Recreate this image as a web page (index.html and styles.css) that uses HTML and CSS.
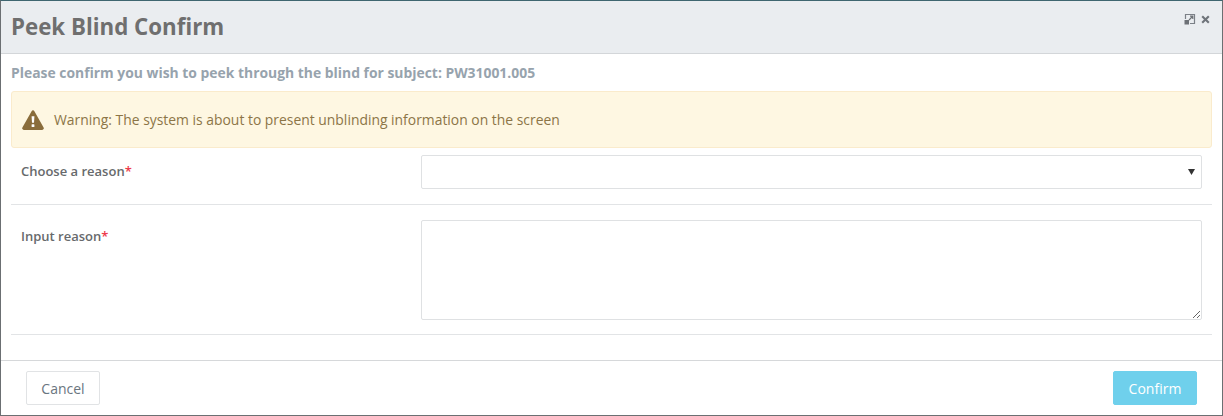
FILE: index.html
```html
<!DOCTYPE html>
<html lang="en">
<head>
    <meta charset="UTF-8">
    <title>Peek Blind Confirm</title>
    <link rel="stylesheet" href="styles.css">
</head>
<body>
    <div class="dialog">
        <div class="dialog-header">
            <h1>Peek Blind Confirm</h1>
            <div class="header-icons">
                <svg class="icon-resize" width="12" height="12" viewBox="0 0 12 12">
                    <path d="M1.5 6V1.5H10.5V10.5H6" fill="none" stroke="#7b8087" stroke-width="1.2"/>
                    <rect x="0.5" y="7" width="4.5" height="4.5" fill="#6d7176"/>
                    <path d="M5 7L8.5 3.5M6 3.2H8.8V6" fill="none" stroke="#6d7176" stroke-width="1.2"/>
                </svg>
                <svg class="icon-close" width="9" height="9" viewBox="0 0 9 9">
                    <path d="M1.2 1.2L7.8 7.8M7.8 1.2L1.2 7.8" stroke="#6f747a" stroke-width="2.1"/>
                </svg>
            </div>
        </div>
        <div class="dialog-body">
            <p class="subject">Please confirm you wish to peek through the blind for subject: PW31001.005</p>
            <div class="alert">
                <svg width="22" height="20" viewBox="0 0 22 20">
                    <path d="M9.6 1.2a1.6 1.6 0 0 1 2.8 0l9.2 16.3a1.6 1.6 0 0 1-1.4 2.4H1.8a1.6 1.6 0 0 1-1.4-2.4z" fill="#8a6d3b"/>
                    <path d="M9.6 6.2h2.8l-.4 6.6h-2z" fill="#fff"/>
                    <rect x="9.6" y="14.2" width="2.8" height="2.8" rx=".6" fill="#fff"/>
                </svg>
                <span>Warning: The system is about to present unblinding information on the screen</span>
            </div>
            <div class="form-row row-select">
                <label>Choose a reason<span class="req">*</span></label>
                <div class="field select-wrap">
                    <select></select>
                    <svg class="select-arrow" width="7" height="7" viewBox="0 0 7 7"><path d="M0 1H7L3.5 7z" fill="#333"/></svg>
                </div>
            </div>
            <div class="form-row row-text">
                <label>Input reason<span class="req">*</span></label>
                <div class="field">
                    <textarea></textarea>
                </div>
            </div>
        </div>
        <div class="dialog-footer">
            <button class="btn btn-cancel">Cancel</button>
            <button class="btn btn-confirm">Confirm</button>
        </div>
    </div>
</body>
</html>
```

FILE: styles.css
```css
* {
    box-sizing: border-box;
}

html, body {
    height: 100%;
}

body {
    margin: 0;
    background: #fff;
    font-family: "Open Sans", "Liberation Sans", sans-serif;
    font-size: 13px;
    color: #676a6c;
}

.dialog {
    height: 416px;
    display: flex;
    flex-direction: column;
    border: 1px solid #6b6f72;
    border-top-color: #3f6670;
    overflow: hidden;
}

.dialog-header {
    height: 53px;
    flex: none;
    display: flex;
    justify-content: space-between;
    padding: 0 10px;
    background: #eaedf0;
    border-bottom: 1px solid #d3d6d9;
}

h1 {
    margin: 0;
    font-size: 22.3px;
    line-height: 51px;
    font-weight: 700;
    color: #6f6f6f;
}

.header-icons {
    display: flex;
    align-items: center;
    gap: 5px;
    height: 12px;
    margin: 12px 2px 0 0;
}

.dialog-body {
    flex: 1;
    padding: 0 10px;
}

.subject {
    margin: 0;
    height: 37px;
    line-height: 38px;
    font-size: 13.9px;
    font-weight: 700;
    color: #97a3ad;
}

.alert {
    height: 57px;
    display: flex;
    align-items: center;
    gap: 10px;
    padding: 0 10px;
    background: #fef7e2;
    border: 1px solid #faebcc;
    border-radius: 3px;
    color: #8c7547;
    font-size: 13.9px;
}

.form-row {
    display: flex;
    border-bottom: 1px solid #e2e4e6;
    padding-left: 10px;
}

.row-select {
    height: 57px;
    padding-top: 7px;
}

.row-text {
    height: 130px;
    padding-top: 15px;
}

label {
    width: 400px;
    flex: none;
    padding-top: 7px;
    font-size: 13px;
    font-weight: 600;
    color: #676a6c;
}

.req {
    color: #ed3b4b;
}

.field {
    flex: 1;
    margin-right: 10px;
}

.select-wrap {
    position: relative;
}

select {
    display: block;
    width: 100%;
    height: 34px;
    appearance: none;
    background: #fff;
    border: 1px solid #dfe1e3;
    border-radius: 2px;
}

.select-arrow {
    position: absolute;
    right: 7px;
    top: 13px;
}

textarea {
    display: block;
    width: 100%;
    height: 100px;
    border: 1px solid #dfe1e3;
    border-radius: 2px;
    background: #fff;
}

.dialog-footer {
    height: 55px;
    flex: none;
    display: flex;
    justify-content: space-between;
    align-items: flex-start;
    padding: 10px 25px 0;
    border-top: 1px solid #d6d8da;
}

.btn {
    height: 34px;
    border-radius: 2px;
    font-family: inherit;
    font-size: 14px;
}

.btn-cancel {
    width: 74px;
    background: #fff;
    border: 1px solid #e1e3e5;
    color: #6a7580;
}

.btn-confirm {
    width: 84px;
    background: #6fd0ec;
    border: 1px solid #6fd0ec;
    color: #fff;
    font-weight: 400;
}
```
